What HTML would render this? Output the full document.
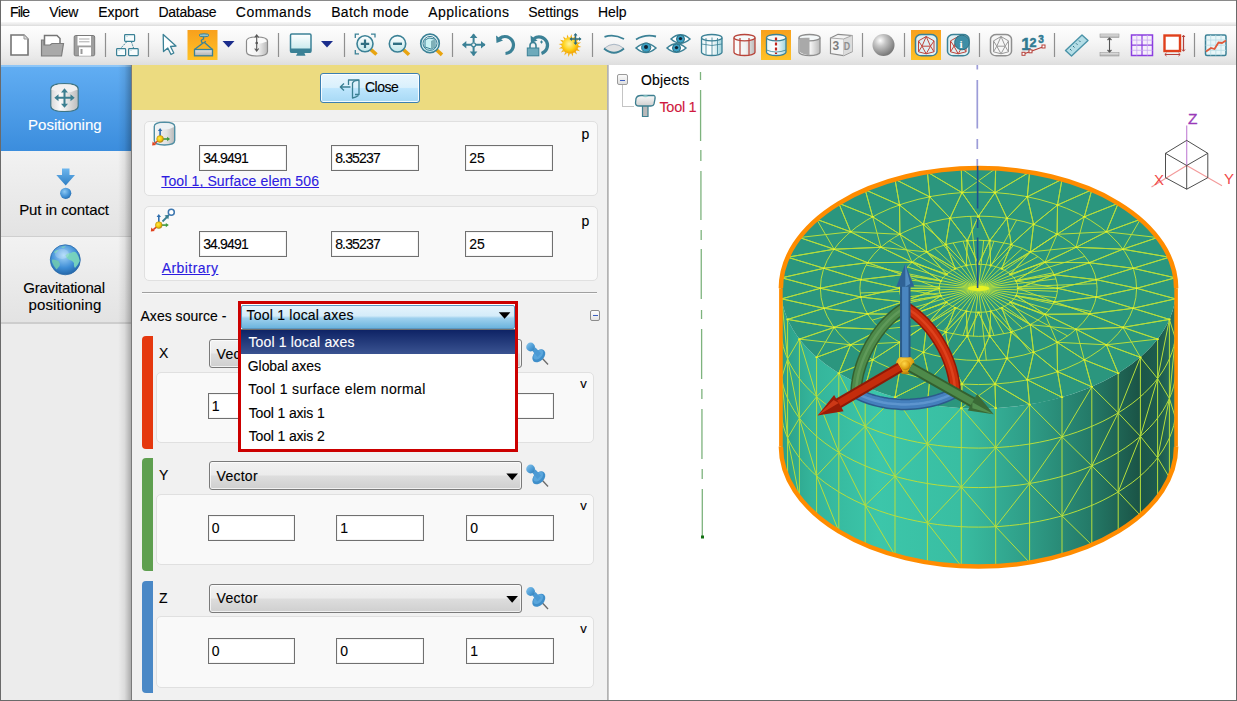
<!DOCTYPE html>
<html><head><meta charset="utf-8"><style>*{margin:0;padding:0;box-sizing:border-box}
html,body{width:1237px;height:701px;overflow:hidden;background:#fff}
body{position:relative;font-family:"Liberation Sans",sans-serif;font-size:14px;color:#000}
.a{position:absolute}
.t{position:absolute;white-space:nowrap;-webkit-text-stroke:.12px currentColor}
svg{position:absolute;overflow:visible}
</style></head><body>
<div class="a" style="left:0;top:0;width:1237px;height:1px;background:#8a8a8a"></div>
<div class="a" style="left:0;top:0;width:1px;height:701px;background:#6a6a6a"></div>
<div class="a" style="left:1236px;top:0;width:1px;height:701px;background:#6a6a6a"></div>
<div class="a" style="left:0;top:700px;width:1237px;height:1px;background:#6a6a6a"></div>
<div class="a" style="left:1px;top:21.5px;width:1235px;height:4.5px;background:linear-gradient(#f8f8f8,#e9e9e9 60%,#dcdcdc)"></div>
<span class="t" style="left:9.9px;top:5.1px;font-size:14px;line-height:14px;color:#000;letter-spacing:-0.80px;">File</span>
<span class="t" style="left:49.2px;top:5.1px;font-size:14px;line-height:14px;color:#000;letter-spacing:-0.33px;">View</span>
<span class="t" style="left:98.2px;top:5.1px;font-size:14px;line-height:14px;color:#000;">Export</span>
<span class="t" style="left:158.4px;top:5.1px;font-size:14px;line-height:14px;color:#000;letter-spacing:-0.26px;">Database</span>
<span class="t" style="left:235.8px;top:5.1px;font-size:14px;line-height:14px;color:#000;letter-spacing:0.51px;">Commands</span>
<span class="t" style="left:331.2px;top:5.1px;font-size:14px;line-height:14px;color:#000;letter-spacing:0.33px;">Batch mode</span>
<span class="t" style="left:428.3px;top:5.1px;font-size:14px;line-height:14px;color:#000;letter-spacing:0.47px;">Applications</span>
<span class="t" style="left:528.3px;top:5.1px;font-size:14px;line-height:14px;color:#000;letter-spacing:-0.06px;">Settings</span>
<span class="t" style="left:598.1px;top:5.1px;font-size:14px;line-height:14px;color:#000;letter-spacing:-0.10px;">Help</span>
<div class="a" style="left:1px;top:26px;width:1235px;height:39px;background:linear-gradient(#fefefe 0%,#f6f6f6 40%,#e9e9e9 80%,#dedede 100%)"></div>
<div class="a" style="left:1px;top:65px;width:131px;height:635px;background:#ececec"></div>
<div class="a" style="left:1px;top:65px;width:131px;height:86px;background:linear-gradient(#62aef3,#3b8ddd)"></div>
<div class="a" style="left:1px;top:65px;width:131px;height:2px;background:#8ec6f7"></div>
<div class="a" style="left:1px;top:151px;width:131px;height:86px;background:linear-gradient(#f2f2f2,#e3e3e3);border-bottom:1px solid #cfcfcf"></div>
<div class="a" style="left:1px;top:237px;width:131px;height:87px;background:linear-gradient(#f2f2f2,#e3e3e3);border-bottom:2px solid #cdcdcd"></div>
<div class="a" style="left:118px;top:65px;width:13px;height:635px;background:linear-gradient(90deg,rgba(0,0,0,0),rgba(0,0,0,.07) 50%,rgba(0,0,0,.27))"></div>
<div class="a" style="left:131px;top:65px;width:1px;height:635px;background:#7a7a7a"></div>
<span class="t" style="left:28.1px;top:116.6px;font-size:15px;line-height:15px;color:#fff;letter-spacing:0.01px;">Positioning</span>
<span class="t" style="left:19.2px;top:202.4px;font-size:15px;line-height:15px;color:#000;letter-spacing:-0.08px;">Put in contact</span>
<span class="t" style="left:23.2px;top:279.6px;font-size:15px;line-height:15px;color:#000;letter-spacing:-0.20px;">Gravitational</span>
<span class="t" style="left:28.6px;top:297.2px;font-size:15px;line-height:15px;color:#000;letter-spacing:0.10px;">positioning</span>
<div class="a" style="left:132px;top:65px;width:476px;height:635px;background:#f1f1f1"></div>
<div class="a" style="left:132px;top:65px;width:475px;height:45px;background:#ecdb80"></div>
<div class="a" style="left:607px;top:65px;width:2px;height:635px;background:linear-gradient(90deg,#a9a9a9,#cfcfcf)"></div>
<div class="a" style="left:609px;top:65px;width:627px;height:635px;background:#fff"></div>
<svg style="left:0;top:0" width="1237" height="65" viewBox="0 0 1237 65"><defs><linearGradient id="og" x1="0" y1="0" x2="0" y2="1"><stop offset="0" stop-color="#f8a01c"/><stop offset="1" stop-color="#ffc226"/></linearGradient><linearGradient id="gw" x1="0" y1="0" x2="1" y2="0"><stop offset="0" stop-color="#fdfdfd"/><stop offset=".55" stop-color="#f2f2f2"/><stop offset="1" stop-color="#b9b9b9"/></linearGradient><linearGradient id="gc" x1="0" y1="0" x2="0" y2="1"><stop offset="0" stop-color="#ffffff"/><stop offset="1" stop-color="#bfe6ea"/></linearGradient><linearGradient id="gt" x1="0" y1="0" x2="1" y2="0"><stop offset="0" stop-color="#e8f6f8"/><stop offset=".5" stop-color="#ffffff"/><stop offset="1" stop-color="#9fd3dc"/></linearGradient><radialGradient id="gs" cx=".35" cy=".3" r=".7"><stop offset="0" stop-color="#ffffff"/><stop offset=".35" stop-color="#c8c8c8"/><stop offset="1" stop-color="#7a7a7a"/></radialGradient><radialGradient id="sun" cx=".45" cy=".4" r=".6"><stop offset="0" stop-color="#fff4a0"/><stop offset=".6" stop-color="#ffd21a"/><stop offset="1" stop-color="#f0a000"/></radialGradient><linearGradient id="gb" x1="0" y1="0" x2="0" y2="1"><stop offset="0" stop-color="#e6e6e6"/><stop offset="1" stop-color="#b0b0b0"/></linearGradient></defs><line x1="105.5" y1="33" x2="105.5" y2="57" stroke="#8f8f8f" stroke-width="1.2"/><line x1="148.5" y1="33" x2="148.5" y2="57" stroke="#8f8f8f" stroke-width="1.2"/><line x1="278.5" y1="33" x2="278.5" y2="57" stroke="#8f8f8f" stroke-width="1.2"/><line x1="344.5" y1="33" x2="344.5" y2="57" stroke="#8f8f8f" stroke-width="1.2"/><line x1="452.5" y1="33" x2="452.5" y2="57" stroke="#8f8f8f" stroke-width="1.2"/><line x1="592.5" y1="33" x2="592.5" y2="57" stroke="#8f8f8f" stroke-width="1.2"/><line x1="862.5" y1="33" x2="862.5" y2="57" stroke="#8f8f8f" stroke-width="1.2"/><line x1="904.5" y1="33" x2="904.5" y2="57" stroke="#8f8f8f" stroke-width="1.2"/><line x1="979.5" y1="33" x2="979.5" y2="57" stroke="#8f8f8f" stroke-width="1.2"/><line x1="1054.5" y1="33" x2="1054.5" y2="57" stroke="#8f8f8f" stroke-width="1.2"/><line x1="1194.5" y1="33" x2="1194.5" y2="57" stroke="#8f8f8f" stroke-width="1.2"/><rect x="187.5" y="30" width="30" height="30" fill="url(#og)"/><rect x="761" y="30" width="30" height="30" fill="url(#og)"/><rect x="911" y="30" width="30" height="30" fill="url(#og)"/><path d="M11 35 H24 L28 39 V55 H11 Z" fill="#fff" stroke="#747474" stroke-width="1.6"/><path d="M24 35 V39 H28" fill="#ddd" stroke="#999" stroke-width="1"/><path d="M44.5 35.5 H57 L60 38.5 V46 H44.5 Z" fill="#fff" stroke="#757575" stroke-width="1.5"/><path d="M41.5 40 H44 V45 H50 L52 43.5 H63.5 L61.5 56 H41.5 Z" fill="#a9a9a9" stroke="#7c7c7c" stroke-width="1.2"/><rect x="74.2" y="35.5" width="20.5" height="20.3" rx="1.5" fill="#9e9e9e" stroke="#7a7a7a" stroke-width="1"/><rect x="77.5" y="36" width="13.5" height="9.5" fill="#fff"/><line x1="79" y1="39" x2="89.5" y2="39" stroke="#aaa"/><line x1="79" y1="41.8" x2="89.5" y2="41.8" stroke="#aaa"/><rect x="79" y="47.3" width="12" height="8.5" fill="#fff"/><rect x="80.5" y="49" width="2" height="5" fill="#999"/><g fill="#f7fcfd" stroke="#3b8196" stroke-width="1.2"><rect x="124.6" y="34.6" width="10" height="6.8" rx=".8"/><rect x="116.6" y="48.6" width="9" height="7" rx=".8"/><rect x="128.6" y="48.6" width="9.6" height="7" rx=".8"/></g><path d="M126.5 42 L121 48 M131.5 42 L133.5 48" stroke="#3b8196" stroke-width="1" fill="none" stroke-dasharray="1.5 1"/><path d="M117.5 50.5 H120 M129.5 50.5 H132 M125.5 36.5 H128" stroke="#cfe3e8" stroke-width="1"/><path d="M163.2 34.5 L176 46 L170.5 46.5 L173.8 53 L171 54.5 L167.8 48 L163.5 51.5 Z" fill="#fff" stroke="#3b8196" stroke-width="1.3" stroke-linejoin="round"/><ellipse cx="204" cy="35.3" rx="5" ry="1.5" fill="#8fc3d0" stroke="#3b8196" stroke-width="1"/><path d="M203.5 36.5 V39 Q200 40 202 42.5 Q205 43.5 205.5 41" fill="none" stroke="#3b8196" stroke-width="1.3"/><path d="M203 43 L194.5 49.5 M205 43 L212.5 49.5" stroke="#3b8196" stroke-width="1.3"/><rect x="194.5" y="49.5" width="18" height="6.3" fill="url(#gb)" stroke="#3b8196" stroke-width="1.3"/><path d="M222.5 41 H234.5 L228.5 47.5 Z" fill="#1b2d8c"/><path d="M321 41 H333 L327 47.5 Z" fill="#1b2d8c"/><path d="M246.5 41 V51.5 Q246.5 56 257 56 Q267.5 56 267.5 51.5 V41 Q267.5 37 257 37 Q246.5 37 246.5 41Z" fill="url(#gw)" stroke="#8a8a8a" stroke-width="1.2"/><path d="M247.2 41.5 Q257 46 266.8 41.5 Q266.8 37.7 257 37.7 Q247.2 37.7 247.2 41.5Z" fill="#fbfbfb"/><path d="M256.7 35.5 V50.5 M254.7 37.5 L256.7 35 L258.7 37.5 M254.7 48.5 L256.7 51 L258.7 48.5" stroke="#555" stroke-width="1.1" fill="none"/><circle cx="256.7" cy="43" r="1.3" fill="#555"/><rect x="290.5" y="34" width="20.5" height="18.3" rx="1.2" fill="url(#gc)" stroke="#3b8196" stroke-width="1.5"/><rect x="290.5" y="48.5" width="20.5" height="3.8" fill="#3b8196"/><path d="M298 52 H304 L305.5 55.8 H296 Z" fill="#3b8196"/><line x1="369.8" y1="48.599999999999994" x2="376.5" y2="54.5" stroke="#e8a410" stroke-width="3.6" stroke-linecap="butt"/><circle cx="365" cy="43.8" r="8" fill="url(#gc)" stroke="#3b8196" stroke-width="1.6"/><path d="M365 39.5 V48 M360.8 43.8 H369.2" stroke="#2f6f82" stroke-width="2.2"/><path d="M355.3 38 V34.2 H359 M371 34.2 H375 V37.5 M355.3 50 V53.8 H359" stroke="#3b8196" stroke-width="1.3" fill="none"/><line x1="402.42" y1="48.72" x2="409" y2="54.8" stroke="#e8a410" stroke-width="3.6" stroke-linecap="butt"/><circle cx="397.5" cy="43.8" r="8.2" fill="url(#gc)" stroke="#3b8196" stroke-width="1.6"/><path d="M393 43.8 H402" stroke="#2f6f82" stroke-width="2.4"/><line x1="435.58" y1="48.98" x2="442" y2="54.8" stroke="#e8a410" stroke-width="3.6" stroke-linecap="butt"/><circle cx="430" cy="43.4" r="9.3" fill="url(#gc)" stroke="#3b8196" stroke-width="1.6"/><circle cx="430" cy="43.4" r="7" fill="none" stroke="#3b8196" stroke-width="1"/><path d="M425 40 L429 38 L435 39 L435 47 L431 49 L425 47 Z" fill="#c9f2f4" stroke="#3b8196" stroke-width="1"/><path d="M431 41 V49 L435 47 V39 Z" fill="#7fb0b8"/><g stroke="#3b8196" stroke-width="2" fill="none"><path d="M473.6 34.5 V42.5 M473.6 47 V55.5 M462.8 44.8 H471.3 M476 44.8 H485"/><circle cx="473.6" cy="44.8" r="2" stroke-width="1.2"/></g><g fill="#3b8196"><path d="M469.8 38 L473.6 33.5 L477.4 38Z"/><path d="M469.8 51.5 L473.6 56 L477.4 51.5Z"/><path d="M466.3 41 L462 44.8 L466.3 48.6Z"/><path d="M481 41 L485.5 44.8 L481 48.6Z"/></g><path d="M499.5 38.5 A8.5 8.5 0 1 1 505.5 53.5" fill="none" stroke="#3b8196" stroke-width="3.2"/><path d="M496 35.5 L503 40.5 L496.5 43 Z" fill="#3b8196"/><path d="M534 38.5 A8.5 8.5 0 1 1 541.5 53.5" fill="none" stroke="#3b8196" stroke-width="3.2"/><path d="M530.5 35.5 L537.5 40.5 L531 43 Z" fill="#3b8196"/><path d="M530 48 V45.5 A3 3 0 0 1 536 45.5 V48" fill="none" stroke="#3b8196" stroke-width="1.6"/><rect x="527.3" y="48" width="11.5" height="7.8" fill="#6eaabb" stroke="#3b8196" stroke-width="1"/><path d="M540 42 H543 M541.5 40.5 V43.5" stroke="#3b8196" stroke-width="1"/><path d="M578.0 45.5 L581.4 47.0 L577.7 47.6Z M577.4 48.6 L580.0 51.2 L576.4 50.4Z M575.7 51.2 L577.0 54.6 L574.0 52.4Z M573.1 52.9 L573.0 56.6 L571.1 53.4Z M570.0 53.5 L568.5 56.9 L567.9 53.2Z M566.9 52.9 L564.3 55.5 L565.1 51.9Z M564.3 51.2 L560.9 52.5 L563.1 49.5Z M562.6 48.6 L558.9 48.5 L562.1 46.6Z M562.0 45.5 L558.6 44.0 L562.3 43.4Z M562.6 42.4 L560.0 39.8 L563.6 40.6Z M564.3 39.8 L563.0 36.4 L566.0 38.6Z M566.9 38.1 L567.0 34.4 L568.9 37.6Z M570.0 37.5 L571.5 34.1 L572.1 37.8Z M573.1 38.1 L575.7 35.5 L574.9 39.1Z M575.7 39.8 L579.1 38.5 L576.9 41.5Z M577.4 42.4 L581.1 42.5 L577.9 44.4Z" fill="#f2b018"/><circle cx="570" cy="45.5" r="8.3" fill="url(#sun)"/><g stroke="#2f6f82" stroke-width="1.5"><path d="M575.5 34 V44 M570.5 39 H580.5"/></g><g fill="#2f6f82"><path d="M573.5 35.5 L575.5 33 L577.5 35.5Z M573.5 42.5 L575.5 45 L577.5 42.5Z M572 37 L569.5 39 L572 41Z M579 37 L581.5 39 L579 41Z"/></g><path d="M604.5 36.8 Q614 33.5 624 39" fill="none" stroke="#3b8196" stroke-width="1.8"/><path d="M604 48.5 Q614 40 624 48.5 Q614 57 604 48.5Z" fill="#e2e2e2" stroke="#9ab" stroke-width=".8"/><path d="M604 48.5 Q614 57 624 48.5" fill="none" stroke="#3b8196" stroke-width="1.8"/><path d="M636 39.5 Q645 34 656 36.5" fill="none" stroke="#3b8196" stroke-width="1.8"/><path d="M636 48 Q646 39 656 48 Q646 57 636 48Z" fill="#fff" stroke="#3b8196" stroke-width="1.5"/><circle cx="646.2" cy="47.5" r="4.6" fill="#3aa0c4" stroke="#2f6f82" stroke-width="1"/><circle cx="646" cy="47" r="2" fill="#123"/><path d="M671.0 39 Q680.5 30.5 690.0 39 Q680.5 47.5 671.0 39Z" fill="#fff" stroke="#3b8196" stroke-width="1.5"/><circle cx="680.5" cy="39" r="4" fill="#3aa0c4" stroke="#2f6f82" stroke-width="1"/><circle cx="680.5" cy="38.6" r="1.7" fill="#123"/><path d="M667.0 48 Q676.5 39.5 686.0 48 Q676.5 56.5 667.0 48Z" fill="#fff" stroke="#3b8196" stroke-width="1.5"/><circle cx="676.5" cy="48" r="4" fill="#3aa0c4" stroke="#2f6f82" stroke-width="1"/><circle cx="676.5" cy="47.6" r="1.7" fill="#123"/><path d="M701.5 37.7 V52.3 A10.25 3.2 0 0 0 722 52.3 V37.7" fill="url(#gt)" stroke="#3b8196" stroke-width="1.3"/><ellipse cx="711.75" cy="37.7" rx="10.25" ry="3.2" fill="#f5f9fa" stroke="#3b8196" stroke-width="1.3"/><path d="M706 38 V54.5 M712 37.5 V55.5 M717.5 38 V54.5" stroke="#3b8196" stroke-width="1" opacity=".8"/><path d="M701.5 44 Q712 47 722 44" fill="none" stroke="#3b8196" stroke-width=".8"/><path d="M734 37.7 V52.3 A10.5 3.2 0 0 0 755 52.3 V37.7" fill="url(#gw)" stroke="#b8443a" stroke-width="1.3"/><ellipse cx="744.5" cy="37.7" rx="10.5" ry="3.2" fill="#f5f9fa" stroke="#b8443a" stroke-width="1.3"/><path d="M740 38 V55 M749 38 V55" stroke="#b8443a" stroke-width="1.2"/><path d="M766.5 37.7 V52.3 A9.75 3.2 0 0 0 786 52.3 V37.7" fill="url(#gt)" stroke="#3b8196" stroke-width="1.3"/><ellipse cx="776.25" cy="37.7" rx="9.75" ry="3.2" fill="#f5f9fa" stroke="#3b8196" stroke-width="1.3"/><path d="M776 37.5 V54" stroke="#c0221a" stroke-width="2.2" stroke-dasharray="3 2"/><path d="M766.5 50 Q776 54 786 50" fill="none" stroke="#3b8196" stroke-width=".8"/><path d="M799 37.7 V52.3 A10.5 3.2 0 0 0 820 52.3 V37.7" fill="url(#gw)" stroke="#8e8e8e" stroke-width="1.3"/><ellipse cx="809.5" cy="37.7" rx="10.5" ry="3.2" fill="#f5f9fa" stroke="#8e8e8e" stroke-width="1.3"/><path d="M799.7 38 V52 Q804 55 809.5 55.5 V37.8 Q804 37.5 799.7 38Z" fill="#a9a9a9"/><path d="M830.5 38 L838 34.3 L852 35.5 V51.5 L843.5 55.6 L830.5 53.5Z" fill="#f4f4f4" stroke="#8a8a8a" stroke-width="1.2"/><path d="M843.5 39 V55.6" stroke="#c0c0c0" stroke-width="1"/><path d="M843.5 39 L852 35.5 V51.5 L843.5 55.6Z" fill="#dcdcdc"/><path d="M830.5 38 L843.5 39 L852 35.5" fill="none" stroke="#aaa" stroke-width="1"/><text x="832.6" y="50.3" font-family="Liberation Sans" font-size="12" font-weight="bold" fill="#7e7e7e">3</text><text x="843.8" y="50.5" font-family="Liberation Sans" font-size="11" font-weight="bold" fill="#8e8e8e" transform="translate(843.8 0) scale(.8 1) translate(-843.8 0)">D</text><circle cx="883.5" cy="45" r="11" fill="url(#gs)"/><rect x="915.5" y="34.5" width="21.5" height="21.299999999999997" rx="6" ry="4.5" fill="#dff0f4" stroke="#3b8196" stroke-width="1.5"/><path d="M918.5 40.9L926.2 36.5 M926.2 36.5L934.0 40.9 M918.5 40.9L922.0 46.2 M926.2 36.5L922.0 46.2 M926.2 36.5L930.5 46.2 M934.0 40.9L930.5 46.2 M922.0 46.2L930.5 46.2 M918.5 40.9L918.5 51.8 M922.0 46.2L918.5 51.8 M922.0 46.2L926.2 53.8 M930.5 46.2L926.2 53.8 M930.5 46.2L934.0 51.8 M934.0 40.9L934.0 51.8 M918.5 51.8L926.2 53.8 M926.2 53.8L934.0 51.8" fill="none" stroke="#c0453c" stroke-width="1"/><rect x="947.5" y="34.5" width="21.5" height="21.299999999999997" rx="6" ry="4.5" fill="#dff0f4" stroke="#3b8196" stroke-width="1.5"/><path d="M950.5 40.9L958.2 36.5 M958.2 36.5L966.0 40.9 M950.5 40.9L954.0 46.2 M958.2 36.5L954.0 46.2 M958.2 36.5L962.5 46.2 M966.0 40.9L962.5 46.2 M954.0 46.2L962.5 46.2 M950.5 40.9L950.5 51.8 M954.0 46.2L950.5 51.8 M954.0 46.2L958.2 53.8 M962.5 46.2L958.2 53.8 M962.5 46.2L966.0 51.8 M966.0 40.9L966.0 51.8 M950.5 51.8L958.2 53.8 M958.2 53.8L966.0 51.8" fill="none" stroke="#c0453c" stroke-width="1"/><circle cx="962" cy="42.5" r="7.3" fill="#3e8ea6" stroke="#2d6f82" stroke-width="1"/><text x="959.6" y="47.5" font-family="Liberation Serif" font-size="11" font-weight="bold" fill="#fff">i</text><rect x="990.5" y="34.5" width="21.0" height="21.299999999999997" rx="6" ry="4.5" fill="#f6f6f6" stroke="#8f8f8f" stroke-width="1.5"/><path d="M993.5 40.9L1001.0 36.5 M1001.0 36.5L1008.5 40.9 M993.5 40.9L996.8 46.2 M1001.0 36.5L996.8 46.2 M1001.0 36.5L1005.2 46.2 M1008.5 40.9L1005.2 46.2 M996.8 46.2L1005.2 46.2 M993.5 40.9L993.5 51.8 M996.8 46.2L993.5 51.8 M996.8 46.2L1001.0 53.8 M1005.2 46.2L1001.0 53.8 M1005.2 46.2L1008.5 51.8 M1008.5 40.9L1008.5 51.8 M993.5 51.8L1001.0 53.8 M1001.0 53.8L1008.5 51.8" fill="none" stroke="#9a9a9a" stroke-width="1"/><g font-family="Liberation Sans" font-weight="bold" fill="#2f7a92" stroke="#2f7a92" stroke-width=".5"><text x="1021.3" y="49.5" font-size="17">1</text><text x="1029.5" y="47.2" font-size="12.5">2</text><text x="1038.3" y="42.6" font-size="10">3</text></g><path d="M1023.5 54 L1030.5 51.5 L1034.5 50 L1044 46.5" stroke="#b5403a" stroke-width="1.3" fill="none"/><g fill="#fff" stroke="#b5403a" stroke-width="1"><rect x="1022" y="52.3" width="3" height="3"/><rect x="1029" y="49.8" width="3" height="3"/><rect x="1042" y="45" width="3" height="3"/></g><path d="M1065.5 50.5 L1082 35 L1088 40.5 L1071.5 56 Z" fill="#b4dde6" stroke="#4a93a8" stroke-width="1.4" stroke-linejoin="round"/><path d="M1070 49 l1.5 1.5 M1073 46 l1.5 1.5 M1076 43.3 l1.5 1.5 M1079 40.5 l1.5 1.5" stroke="#2f6f82" stroke-width="1"/><rect x="1100" y="34" width="19" height="3.5" fill="url(#gb)" stroke="#999" stroke-width=".6"/><rect x="1100" y="52.5" width="19" height="3.5" fill="url(#gb)" stroke="#999" stroke-width=".6"/><path d="M1109.5 38 V52 M1107.5 40 L1109.5 38 L1111.5 40 M1107.5 50 L1109.5 52 L1111.5 50" stroke="#555" stroke-width="1.1" fill="none"/><rect x="1131.5" y="35" width="21" height="20.5" fill="#f6f0fb" stroke="#8a3ee0" stroke-width="1.5"/><path d="M1142 35 V55.5 M1131.5 45.2 H1152.5" stroke="#8a3ee0" stroke-width="1.2"/><path d="M1136.8 35 V55.5 M1147.3 35 V55.5 M1131.5 40.1 H1152.5 M1131.5 50.3 H1152.5" stroke="#c8a8f0" stroke-width=".8"/><rect x="1164.5" y="35.5" width="15.5" height="15.5" fill="#fff" stroke="#e0401c" stroke-width="2.4"/><path d="M1183.5 35.5 V51 M1165 54.5 H1180" stroke="#b5403a" stroke-width="1.2"/><path d="M1182 37 L1183.5 35.2 L1185 37 M1182 49.5 L1183.5 51.3 L1185 49.5 M1166.5 53 L1164.8 54.5 L1166.5 56 M1178.5 53 L1180.2 54.5 L1178.5 56" stroke="#b5403a" stroke-width="1" fill="none"/><rect x="1205.5" y="35" width="20.5" height="20.5" rx="1.5" fill="#e8f6f8" stroke="#3b8196" stroke-width="1.5"/><path d="M1210.7 35 V55.5 M1215.8 35 V55.5 M1221 35 V55.5 M1205.5 40 H1226 M1205.5 45.2 H1226 M1205.5 50.3 H1226" stroke="#b8dce4" stroke-width=".8"/><path d="M1206 51.5 L1211 48 L1214.5 49 L1218.5 42.5 L1222 43 L1226 40.5" fill="none" stroke="#e05a3a" stroke-width="1.8"/></svg>

<style>
.card{position:absolute;background:#f9f9f9;border:1px solid #e0e0e0;border-radius:5px}
.inp{position:absolute;background:#fff;border:1px solid #707070;box-shadow:inset 0 0 0 1px #f4f4f4}
.combo{position:absolute;border:1px solid #7a7a7a;border-radius:3px;background:linear-gradient(#f2f2f2 0%,#ebebeb 48%,#dddddd 52%,#cfcfcf 100%);box-shadow:inset 0 0 0 1px rgba(255,255,255,.7)}
.bar{position:absolute;left:142px;width:10.5px;border-radius:4px 0 0 4px}
</style>
<div class="a" style="left:320px;top:72.5px;width:100px;height:30px;border:1px solid #3c7fb1;border-radius:3px;background:linear-gradient(#eaf6fd 0%,#d9f0fc 48%,#bee6fd 52%,#a7d9f5 100%);box-shadow:inset 0 0 0 1px rgba(255,255,255,.85)"></div>
<svg style="left:0;top:0" width="1" height="1"><g fill="none" stroke="#3a7f92" stroke-width="1.3" stroke-linejoin="round"><path d="M348.5 85 V80 H359 V94.5 H355"/><path d="M359 80.5 Q354 80 352.5 83 V98 Q355.5 97.5 358.5 95.5"/><path d="M340.5 87 H350.5 M344 83.5 L340.3 87 L344 90.5"/></g></svg>
<span class="t" style="left:365.0px;top:80.1px;font-size:14px;line-height:14px;color:#000;letter-spacing:-0.53px;">Close</span>
<div class="card" style="left:143.5px;top:120.5px;width:454.5px;height:75.0px"></div>
<div class="card" style="left:143.5px;top:206.3px;width:454.5px;height:75.19999999999999px"></div>
<div class="inp" style="left:199px;top:145.2px;width:87.5px;height:26.0px"></div>
<span class="t" style="left:203.2px;top:151.2px;font-size:14px;line-height:14px;color:#000;letter-spacing:-0.85px;">34.9491</span>
<div class="inp" style="left:331px;top:145.2px;width:88px;height:26.0px"></div>
<span class="t" style="left:335.2px;top:151.2px;font-size:14px;line-height:14px;color:#000;letter-spacing:-0.85px;">8.35237</span>
<div class="inp" style="left:465px;top:145.2px;width:87.79999999999995px;height:26.0px"></div>
<span class="t" style="left:469.2px;top:151.2px;font-size:14px;line-height:14px;color:#000;">25</span>
<div class="inp" style="left:199px;top:231.2px;width:87.5px;height:26.0px"></div>
<span class="t" style="left:203.2px;top:237.2px;font-size:14px;line-height:14px;color:#000;letter-spacing:-0.85px;">34.9491</span>
<div class="inp" style="left:331px;top:231.2px;width:88px;height:26.0px"></div>
<span class="t" style="left:335.2px;top:237.2px;font-size:14px;line-height:14px;color:#000;letter-spacing:-0.85px;">8.35237</span>
<div class="inp" style="left:465px;top:231.2px;width:87.79999999999995px;height:26.0px"></div>
<span class="t" style="left:469.2px;top:237.2px;font-size:14px;line-height:14px;color:#000;">25</span>
<span class="t" style="left:581.5px;top:127.0px;font-size:14px;line-height:14px;color:#000;">p</span>
<span class="t" style="left:581.5px;top:213.8px;font-size:14px;line-height:14px;color:#000;">p</span>
<span class="t" style="left:161.3px;top:174.3px;font-size:14px;line-height:14px;color:#2d1ce0;letter-spacing:0.12px;text-decoration:underline;">Tool 1, Surface elem 506</span>
<span class="t" style="left:161.8px;top:261.1px;font-size:14px;line-height:14px;color:#2d1ce0;letter-spacing:0.41px;text-decoration:underline;">Arbitrary</span>
<svg style="left:0;top:0" width="1" height="1"><defs><linearGradient id="cw" x1="0" y1="0" x2="1" y2="0"><stop offset="0" stop-color="#f6f6f6"/><stop offset=".6" stop-color="#e2e2e2"/><stop offset="1" stop-color="#b8b8b8"/></linearGradient><radialGradient id="yd" cx=".4" cy=".4" r=".6"><stop offset="0" stop-color="#ffe84a"/><stop offset=".7" stop-color="#f2c200"/><stop offset="1" stop-color="#a88420"/></radialGradient><linearGradient id="pin" x1="0" y1="0" x2="1" y2="1"><stop offset="0" stop-color="#8cc8ee"/><stop offset=".6" stop-color="#4a9ad4"/><stop offset="1" stop-color="#2f78b0"/></linearGradient></defs><path d="M154.3 126.5 V140.5 Q154.3 145 164.5 145 Q174.7 145 174.7 140.5 V126.5 Q174.7 122.3 164.5 122.3 Q154.3 122.3 154.3 126.5Z" fill="url(#cw)" stroke="#4f8ea3" stroke-width="1.4"/><path d="M155 127 Q164.5 132 174 127 Q174 123 164.5 123 Q155 123 155 127Z" fill="#edf2f4"/><path d="M160.1 139 V130" stroke="#2f6eae" stroke-width="1.6"/><path d="M157.9 131 L160.1 128 L162.29999999999998 131Z" fill="#2f6eae"/><path d="M160.1 139 H168.1" stroke="#3f9a3f" stroke-width="1.6"/><path d="M167.1 136.8 L170.1 139 L167.1 141.2Z" fill="#3f9a3f"/><path d="M160.1 139 L154.6 143.5" stroke="#e0401c" stroke-width="1.6"/><path d="M152.1 145.5 L152.6 141.5 L156.1 145Z" fill="#e0401c"/><circle cx="160.1" cy="139" r="3.4" fill="url(#yd)" stroke="#b89018" stroke-width=".6"/><path d="M158.8 225.1 V216.1" stroke="#2f6eae" stroke-width="1.6"/><path d="M156.60000000000002 217.1 L158.8 214.1 L161.0 217.1Z" fill="#2f6eae"/><path d="M158.8 225.1 H166.8" stroke="#3f9a3f" stroke-width="1.6"/><path d="M165.8 222.9 L168.8 225.1 L165.8 227.29999999999998Z" fill="#3f9a3f"/><path d="M158.8 225.1 L153.3 229.6" stroke="#e0401c" stroke-width="1.6"/><path d="M150.8 231.6 L151.3 227.6 L154.8 231.1Z" fill="#e0401c"/><circle cx="158.8" cy="225.1" r="3.4" fill="url(#yd)" stroke="#b89018" stroke-width=".6"/><path d="M162.5 221.5 L167 217" stroke="#3a7f92" stroke-width="1.8"/><path d="M164.5 215.5 L169.3 214.5 L168.3 219.3Z" fill="#3a7f92"/><circle cx="171.3" cy="212.3" r="3" fill="#fff" stroke="#3f78b0" stroke-width="1.5"/></svg>
<div class="a" style="left:142px;top:291.5px;width:455px;height:1px;background:#a0a0a0"></div>
<div class="a" style="left:142px;top:292.5px;width:455px;height:1px;background:#fbfbfb"></div>
<span class="t" style="left:140.5px;top:308.7px;font-size:14px;line-height:14px;color:#000;letter-spacing:0.02px;">Axes source -</span>
<div class="a" style="left:589.5px;top:310px;width:10.5px;height:10.5px;border:1px solid #8c8c8c;border-radius:2px;background:linear-gradient(#fdfdfd,#e4e4e4)"><div class="a" style="left:2px;top:4px;width:5px;height:1.2px;background:#3a5fc0"></div></div>
<div class="bar" style="top:336px;height:112.5px;background:#e5380e"></div>
<span class="t" style="left:158.9px;top:346.3px;font-size:14px;line-height:14px;color:#000;">X</span>
<div class="combo" style="left:209px;top:339.3px;width:313px;height:29px"></div>
<span class="t" style="left:216.6px;top:346.6px;font-size:14px;line-height:14px;color:#000;letter-spacing:0.26px;">Vector</span>
<svg style="left:0;top:0" width="1" height="1"><path d="M506.3 351.5 H518 L512.15 358.3Z" fill="#000"/></svg>
<div class="card" style="left:155.8px;top:371.5px;width:438.49999999999994px;height:71.5px"></div>
<span class="t" style="left:580.2px;top:377.4px;font-size:13px;line-height:13px;color:#000;">v</span>
<div class="inp" style="left:207.5px;top:393.2px;width:87.5px;height:26.0px"></div>
<span class="t" style="left:211.7px;top:399.2px;font-size:14px;line-height:14px;color:#000;">1</span>
<div class="inp" style="left:336px;top:393.2px;width:87.5px;height:26.0px"></div>
<span class="t" style="left:340.2px;top:399.2px;font-size:14px;line-height:14px;color:#000;">0</span>
<div class="inp" style="left:466px;top:393.2px;width:87.79999999999995px;height:26.0px"></div>
<span class="t" style="left:470.2px;top:399.2px;font-size:14px;line-height:14px;color:#000;">0</span>
<div class="bar" style="top:458px;height:112.5px;background:#5e9f4f"></div>
<span class="t" style="left:158.9px;top:468.3px;font-size:14px;line-height:14px;color:#000;">Y</span>
<div class="combo" style="left:209px;top:461.3px;width:313px;height:29px"></div>
<span class="t" style="left:216.6px;top:468.6px;font-size:14px;line-height:14px;color:#000;letter-spacing:0.26px;">Vector</span>
<svg style="left:0;top:0" width="1" height="1"><path d="M506.3 473.5 H518 L512.15 480.3Z" fill="#000"/></svg>
<div class="card" style="left:155.8px;top:493.5px;width:438.49999999999994px;height:71.5px"></div>
<span class="t" style="left:580.2px;top:499.4px;font-size:13px;line-height:13px;color:#000;">v</span>
<div class="inp" style="left:207.5px;top:515.2px;width:87.5px;height:26.0px"></div>
<span class="t" style="left:211.7px;top:521.2px;font-size:14px;line-height:14px;color:#000;">0</span>
<div class="inp" style="left:336px;top:515.2px;width:87.5px;height:26.0px"></div>
<span class="t" style="left:340.2px;top:521.2px;font-size:14px;line-height:14px;color:#000;">1</span>
<div class="inp" style="left:466px;top:515.2px;width:87.79999999999995px;height:26.0px"></div>
<span class="t" style="left:470.2px;top:521.2px;font-size:14px;line-height:14px;color:#000;">0</span>
<div class="bar" style="top:580.5px;height:112.5px;background:#4a88c6"></div>
<span class="t" style="left:158.9px;top:590.8px;font-size:14px;line-height:14px;color:#000;">Z</span>
<div class="combo" style="left:209px;top:583.8px;width:313px;height:29px"></div>
<span class="t" style="left:216.6px;top:591.1px;font-size:14px;line-height:14px;color:#000;letter-spacing:0.26px;">Vector</span>
<svg style="left:0;top:0" width="1" height="1"><path d="M506.3 596.0 H518 L512.15 602.8Z" fill="#000"/></svg>
<div class="card" style="left:155.8px;top:616.0px;width:438.49999999999994px;height:71.5px"></div>
<span class="t" style="left:580.2px;top:621.9px;font-size:13px;line-height:13px;color:#000;">v</span>
<div class="inp" style="left:207.5px;top:637.7px;width:87.5px;height:26.0px"></div>
<span class="t" style="left:211.7px;top:643.7px;font-size:14px;line-height:14px;color:#000;">0</span>
<div class="inp" style="left:336px;top:637.7px;width:87.5px;height:26.0px"></div>
<span class="t" style="left:340.2px;top:643.7px;font-size:14px;line-height:14px;color:#000;">0</span>
<div class="inp" style="left:466px;top:637.7px;width:87.79999999999995px;height:26.0px"></div>
<span class="t" style="left:470.2px;top:643.7px;font-size:14px;line-height:14px;color:#000;">1</span>
<svg style="left:0;top:0" width="1" height="1"><path d="M542 358 L548 364.5" stroke="#6a6a6a" stroke-width="1.3"/><ellipse cx="538.8" cy="355.8" rx="7.6" ry="5.2" transform="rotate(-45 538.8 355.8)" fill="#3f8fca"/><ellipse cx="538.2" cy="354.6" rx="6" ry="3.6" transform="rotate(-45 538.2 354.6)" fill="#5aa6dc"/><path d="M532 350.5 L535.5 347.5 L541 353.5 L537.5 357Z" fill="#4c9ad4"/><circle cx="530.6" cy="347" r="4.4" fill="url(#pin)"/><path d="M542 480 L548 486.5" stroke="#6a6a6a" stroke-width="1.3"/><ellipse cx="538.8" cy="477.8" rx="7.6" ry="5.2" transform="rotate(-45 538.8 477.8)" fill="#3f8fca"/><ellipse cx="538.2" cy="476.6" rx="6" ry="3.6" transform="rotate(-45 538.2 476.6)" fill="#5aa6dc"/><path d="M532 472.5 L535.5 469.5 L541 475.5 L537.5 479Z" fill="#4c9ad4"/><circle cx="530.6" cy="469" r="4.4" fill="url(#pin)"/><path d="M542 602.5 L548 609.0" stroke="#6a6a6a" stroke-width="1.3"/><ellipse cx="538.8" cy="600.3" rx="7.6" ry="5.2" transform="rotate(-45 538.8 600.3)" fill="#3f8fca"/><ellipse cx="538.2" cy="599.1" rx="6" ry="3.6" transform="rotate(-45 538.2 599.1)" fill="#5aa6dc"/><path d="M532 595.0 L535.5 592.0 L541 598.0 L537.5 601.5Z" fill="#4c9ad4"/><circle cx="530.6" cy="591.5" r="4.4" fill="url(#pin)"/></svg>
<div class="a" style="left:238px;top:301px;width:280px;height:151px;border:3px solid #cc0000;background:#fff"></div>
<div class="a" style="left:241px;top:304.5px;width:274px;height:24.5px;border:1px solid #5c97c0;border-radius:2px;background:linear-gradient(#e6f4fc 0%,#d4ecf9 45%,#9fd1ee 55%,#6cb4de 100%)"></div>
<div class="a" style="left:241px;top:328.8px;width:274px;height:1.5px;background:#6f6f6f"></div>
<div class="a" style="left:241px;top:330.2px;width:274px;height:23.8px;background:linear-gradient(#0e2365,#3a5391)"></div>
<svg style="left:0;top:0" width="1" height="1"><path d="M498.8 312.3 H510.4 L504.6 318.8Z" fill="#000"/></svg>
<span class="t" style="left:246.6px;top:308.2px;font-size:14px;line-height:14px;color:#000;letter-spacing:0.21px;">Tool 1 local axes</span>
<span class="t" style="left:248.4px;top:334.9px;font-size:14px;line-height:14px;color:#fff;letter-spacing:0.16px;">Tool 1 local axes</span>
<span class="t" style="left:247.8px;top:358.7px;font-size:14px;line-height:14px;color:#000;letter-spacing:-0.08px;">Global axes</span>
<span class="t" style="left:248.3px;top:382.2px;font-size:14px;line-height:14px;color:#000;letter-spacing:0.36px;">Tool 1 surface elem normal</span>
<span class="t" style="left:248.7px;top:406.1px;font-size:14px;line-height:14px;color:#000;letter-spacing:-0.15px;">Tool 1 axis 1</span>
<span class="t" style="left:248.7px;top:429.3px;font-size:14px;line-height:14px;color:#000;letter-spacing:-0.15px;">Tool 1 axis 2</span>
<svg style="left:0;top:0" width="1" height="1"><defs><linearGradient id="nc" x1="0" y1="0" x2="1" y2="0"><stop offset="0" stop-color="#d8d8d8"/><stop offset=".35" stop-color="#fbfbfb"/><stop offset="1" stop-color="#bdbdbd"/></linearGradient><linearGradient id="na" x1="0" y1="0" x2="0" y2="1"><stop offset="0" stop-color="#6db6ee"/><stop offset="1" stop-color="#2f7fc4"/></linearGradient><radialGradient id="nb" cx=".4" cy=".35" r=".7"><stop offset="0" stop-color="#8cc8f4"/><stop offset=".7" stop-color="#3a8ad0"/><stop offset="1" stop-color="#2a6aa8"/></radialGradient><radialGradient id="ng" cx=".45" cy=".35" r=".7"><stop offset="0" stop-color="#a8d8fa"/><stop offset=".6" stop-color="#3f8ed6"/><stop offset="1" stop-color="#1f5fa0"/></radialGradient></defs><path d="M50.8 89 V106 Q50.8 111.5 64.5 111.5 Q78.2 111.5 78.2 106 V89 Q78.2 83.6 64.5 83.6 Q50.8 83.6 50.8 89Z" fill="url(#nc)" stroke="#3f7585" stroke-width="1.1"/><path d="M51.5 89.5 Q64.5 96.5 77.5 89.5 Q77.5 84.3 64.5 84.3 Q51.5 84.3 51.5 89.5Z" fill="#f0f0f0"/><g stroke="#3d7f90" stroke-width="2" fill="none"><path d="M64.5 90 V106 M56 97.8 H73"/></g><g fill="#3d7f90"><path d="M61 92.5 L64.5 88.3 L68 92.5Z M61 103.7 L64.5 107.7 L68 103.7Z M58.5 94.3 L54.3 97.8 L58.5 101.3Z M70.5 94.3 L74.7 97.8 L70.5 101.3Z"/></g><path d="M62 168.5 H69.5 V175 H75 L65.7 185.5 L56.3 175 H62Z" fill="url(#na)"/><circle cx="65.7" cy="193.3" r="5.6" fill="url(#nb)"/><circle cx="65.3" cy="259.8" r="15" fill="url(#ng)" stroke="#2a6aa8" stroke-width=".8"/><path d="M65.5 255.5 Q67 252.5 71 253 Q74 251 76 252.5 Q79 256 79.8 261 Q78 265 75 268 Q73.5 266 74 263 Q72 260 69.5 260 Q66.5 259 65.5 255.5Z" fill="#78d4bc" opacity=".95"/><path d="M52 259.5 Q55 259 58.5 261 Q60.5 263.5 59.5 266 Q57.5 268.5 56.5 269.5 Q53.5 266 52 262Z" fill="#70c8b0" opacity=".9"/><path d="M54 252 Q56 249.5 58.5 250 Q57 252.5 55 253.5Z M61.5 247 Q63.5 246 66 246.5 Q64 248 62 248Z" fill="#78d0b8" opacity=".9"/><ellipse cx="62" cy="254" rx="7" ry="5" fill="#fff" opacity=".18"/></svg>
<div class="a" style="left:616.5px;top:74px;width:11px;height:11px;border:1px solid #9a9a9a;border-radius:2px;background:linear-gradient(#fafafa,#dedede)"><div class="a" style="left:2px;top:4.5px;width:5px;height:1.3px;background:#3f5fbf"></div></div>
<div class="a" style="left:621.5px;top:85px;width:1px;height:22px;background:#c4c4c4"></div>
<div class="a" style="left:621.5px;top:106px;width:12px;height:1px;background:#c4c4c4"></div>
<span class="t" style="left:640.9px;top:72.8px;font-size:14px;line-height:14px;color:#000;letter-spacing:0.17px;">Objects</span>
<span class="t" style="left:659.4px;top:99.5px;font-size:14.5px;line-height:14.5px;color:#d01840;letter-spacing:-0.28px;">Tool 1</span>
<svg style="left:0;top:0" width="1" height="1"><defs><linearGradient id="hm" x1="0" y1="0" x2="0" y2="1"><stop offset="0" stop-color="#fafafa"/><stop offset="1" stop-color="#cfcfcf"/></linearGradient></defs><path d="M642.5 105 V116.5 H648 V105" fill="#b9b9b9" stroke="#3d7f90" stroke-width="1.2"/><path d="M636 98.5 Q637 95.5 641 95.5 H654 Q655.5 96 655 99 L654 104 Q653.5 106 651 106 H639 Q635.5 106 635.5 103 Z" fill="url(#hm)" stroke="#3d7f90" stroke-width="1.3"/><ellipse cx="645.5" cy="96.2" rx="2.5" ry="1" fill="#9cc"/></svg>
<svg style="left:0;top:0" width="1" height="1"><line x1="700.50" y1="72" x2="700.50" y2="80" stroke="#7db37d" stroke-width="1.3"/><line x1="700.58" y1="90" x2="700.58" y2="141" stroke="#7db37d" stroke-width="1.3"/><line x1="700.84" y1="150" x2="700.84" y2="161" stroke="#7db37d" stroke-width="1.3"/><line x1="700.93" y1="171" x2="700.93" y2="220" stroke="#7db37d" stroke-width="1.3"/><line x1="701.18" y1="230" x2="701.18" y2="240" stroke="#7db37d" stroke-width="1.3"/><line x1="701.26" y1="249" x2="701.26" y2="299" stroke="#7db37d" stroke-width="1.3"/><line x1="701.53" y1="310" x2="701.53" y2="319" stroke="#7db37d" stroke-width="1.3"/><line x1="701.61" y1="329" x2="701.61" y2="379" stroke="#7db37d" stroke-width="1.3"/><line x1="701.87" y1="389" x2="701.87" y2="399" stroke="#7db37d" stroke-width="1.3"/><line x1="701.95" y1="409" x2="701.95" y2="459" stroke="#7db37d" stroke-width="1.3"/><line x1="702.21" y1="469" x2="702.21" y2="479" stroke="#7db37d" stroke-width="1.3"/><line x1="702.30" y1="489" x2="702.30" y2="536" stroke="#7db37d" stroke-width="1.3"/><rect x="701" y="535.5" width="3" height="3" fill="#127012"/><line x1="977.3" y1="65" x2="977.3" y2="69.5" stroke="#9c9cd8" stroke-width="1.7"/><line x1="977.3" y1="80" x2="977.3" y2="128.5" stroke="#9c9cd8" stroke-width="1.7"/><line x1="977.3" y1="139" x2="977.3" y2="149" stroke="#9c9cd8" stroke-width="1.7"/><line x1="977.3" y1="159" x2="977.3" y2="166" stroke="#9c9cd8" stroke-width="1.7"/></svg>
<svg style="left:0;top:0" width="1" height="1"><defs><linearGradient id="side" x1="779" y1="0" x2="1178" y2="0" gradientUnits="userSpaceOnUse"><stop offset="0" stop-color="#2a9c86"/><stop offset=".08" stop-color="#34b49a"/><stop offset=".25" stop-color="#3cc6aa"/><stop offset=".45" stop-color="#39bea2"/><stop offset=".62" stop-color="#2f9e88"/><stop offset=".78" stop-color="#247a68"/><stop offset=".9" stop-color="#1b5547"/><stop offset=".96" stop-color="#1f5e50"/><stop offset="1" stop-color="#2a7a68"/></linearGradient></defs><path d="M780.9 288.3 V446.4 A197.6 120.25 0 0 0 1176.1 446.4 V288.3 A197.6 120.25 0 0 1 780.9 288.3 Z" fill="url(#side)"/><ellipse cx="978.5" cy="288.3" rx="197.6" ry="120.25" fill="#2b967e"/><path d="M781.7 298.8L781.7 456.9 M787.6 319.4L787.6 477.5 M799.4 339.1L799.4 497.2 M816.6 357.3L816.6 515.4 M838.8 373.3L838.8 531.4 M865.2 386.8L865.2 544.9 M895.0 397.3L895.0 555.4 M927.4 404.5L927.4 562.6 M961.3 408.1L961.3 566.2 M995.7 408.1L995.7 566.2 M1029.6 404.5L1029.6 562.6 M1062.0 397.3L1062.0 555.4 M1091.8 386.8L1091.8 544.9 M1118.2 373.3L1118.2 531.4 M1140.4 357.3L1140.4 515.4 M1157.6 339.1L1157.6 497.2 M1169.4 319.4L1169.4 477.5 M1175.3 298.8L1175.3 456.9 M780.9 327.8L781.2 334.1L782.0 340.4L783.3 346.6L785.2 352.8L787.6 358.9L790.6 365.0L794.0 370.9L798.0 376.7L802.4 382.4L807.4 387.9L812.8 393.3L818.6 398.5L824.9 403.5L831.7 408.3L838.8 412.9L846.3 417.2L854.1 421.3L862.4 425.1L870.9 428.7L879.7 432.0L888.8 435.0L898.1 437.7L907.7 440.1L917.4 442.2L927.4 444.0L937.4 445.4L947.6 446.6L957.8 447.4L968.2 447.9L978.5 448.1L988.8 447.9L999.2 447.4L1009.4 446.6L1019.6 445.4L1029.6 444.0L1039.6 442.2L1049.3 440.1L1058.9 437.7L1068.2 435.0L1077.3 432.0L1086.1 428.7L1094.6 425.1L1102.9 421.3L1110.7 417.2L1118.2 412.9L1125.3 408.3L1132.1 403.5L1138.4 398.5L1144.2 393.3L1149.6 387.9L1154.6 382.4L1159.0 376.7L1163.0 370.9L1166.4 365.0L1169.4 358.9L1171.8 352.8L1173.7 346.6L1175.0 340.4L1175.8 334.1L1176.1 327.8 M780.9 367.4L781.2 373.6L782.0 379.9L783.3 386.2L785.2 392.4L787.6 398.5L790.6 404.5L794.0 410.4L798.0 416.3L802.4 421.9L807.4 427.5L812.8 432.8L818.6 438.0L824.9 443.0L831.7 447.8L838.8 452.4L846.3 456.7L854.1 460.8L862.4 464.6L870.9 468.2L879.7 471.5L888.8 474.5L898.1 477.2L907.7 479.6L917.4 481.7L927.4 483.5L937.4 485.0L947.6 486.1L957.8 486.9L968.2 487.4L978.5 487.6L988.8 487.4L999.2 486.9L1009.4 486.1L1019.6 485.0L1029.6 483.5L1039.6 481.7L1049.3 479.6L1058.9 477.2L1068.2 474.5L1077.3 471.5L1086.1 468.2L1094.6 464.6L1102.9 460.8L1110.7 456.7L1118.2 452.4L1125.3 447.8L1132.1 443.0L1138.4 438.0L1144.2 432.8L1149.6 427.5L1154.6 421.9L1159.0 416.3L1163.0 410.4L1166.4 404.5L1169.4 398.5L1171.8 392.4L1173.7 386.2L1175.0 379.9L1175.8 373.6L1176.1 367.4 M780.9 406.9L781.2 413.2L782.0 419.4L783.3 425.7L785.2 431.9L787.6 438.0L790.6 444.0L794.0 450.0L798.0 455.8L802.4 461.5L807.4 467.0L812.8 472.4L818.6 477.6L824.9 482.6L831.7 487.3L838.8 491.9L846.3 496.2L854.1 500.3L862.4 504.2L870.9 507.7L879.7 511.0L888.8 514.0L898.1 516.7L907.7 519.1L917.4 521.2L927.4 523.0L937.4 524.5L947.6 525.6L957.8 526.5L968.2 527.0L978.5 527.1L988.8 527.0L999.2 526.5L1009.4 525.6L1019.6 524.5L1029.6 523.0L1039.6 521.2L1049.3 519.1L1058.9 516.7L1068.2 514.0L1077.3 511.0L1086.1 507.7L1094.6 504.2L1102.9 500.3L1110.7 496.2L1118.2 491.9L1125.3 487.3L1132.1 482.6L1138.4 477.6L1144.2 472.4L1149.6 467.0L1154.6 461.5L1159.0 455.8L1163.0 450.0L1166.4 444.0L1169.4 438.0L1171.8 431.9L1173.7 425.7L1175.0 419.4L1175.8 413.2L1176.1 406.9 M781.7 298.8L787.6 358.9 M781.7 377.8L787.6 438.0 M781.7 377.8L787.6 358.9 M787.6 358.9L799.4 418.2 M787.6 358.9L799.4 339.1 M787.6 438.0L799.4 497.2 M787.6 438.0L799.4 418.2 M799.4 339.1L816.6 396.8 M799.4 418.2L816.6 475.8 M799.4 418.2L816.6 396.8 M816.6 396.8L838.8 452.4 M816.6 396.8L838.8 373.3 M816.6 475.8L838.8 531.4 M816.6 475.8L838.8 452.4 M838.8 373.3L865.2 426.3 M838.8 452.4L865.2 505.4 M838.8 452.4L865.2 426.3 M865.2 426.3L895.0 476.3 M865.2 426.3L895.0 397.3 M865.2 505.4L895.0 555.4 M865.2 505.4L895.0 476.3 M895.0 397.3L927.4 444.0 M895.0 476.3L927.4 523.0 M895.0 476.3L927.4 444.0 M927.4 444.0L961.3 487.1 M927.4 444.0L961.3 408.1 M927.4 523.0L961.3 566.2 M927.4 523.0L961.3 487.1 M961.3 408.1L995.7 447.6 M961.3 487.1L995.7 526.7 M961.3 487.1L995.7 447.6 M995.7 447.6L1029.6 483.5 M995.7 447.6L1029.6 404.5 M995.7 526.7L1029.6 562.6 M995.7 526.7L1029.6 483.5 M1029.6 404.5L1062.0 436.8 M1029.6 483.5L1062.0 515.9 M1029.6 483.5L1062.0 436.8 M1062.0 436.8L1091.8 465.9 M1062.0 436.8L1091.8 386.8 M1062.0 515.9L1091.8 544.9 M1062.0 515.9L1091.8 465.9 M1091.8 386.8L1118.2 412.9 M1091.8 465.9L1118.2 491.9 M1091.8 465.9L1118.2 412.9 M1118.2 412.9L1140.4 436.3 M1118.2 412.9L1140.4 357.3 M1118.2 491.9L1140.4 515.4 M1118.2 491.9L1140.4 436.3 M1140.4 357.3L1157.6 378.6 M1140.4 436.3L1157.6 457.7 M1140.4 436.3L1157.6 378.6 M1157.6 378.6L1169.4 398.5 M1157.6 378.6L1169.4 319.4 M1157.6 457.7L1169.4 477.5 M1157.6 457.7L1169.4 398.5 M1169.4 319.4L1175.3 338.3 M1169.4 398.5L1175.3 417.4 M1169.4 398.5L1175.3 338.3" fill="none" stroke="#b6de3c" stroke-width="1"/><path d="M939.0 288.3A39.5 24.1 0 1 0 1018.0 288.3A39.5 24.1 0 1 0 939.0 288.3 M899.5 288.3A79.0 48.1 0 1 0 1057.5 288.3A79.0 48.1 0 1 0 899.5 288.3 M859.9 288.3A118.6 72.1 0 1 0 1097.1 288.3A118.6 72.1 0 1 0 859.9 288.3 M820.4 288.3A158.1 96.2 0 1 0 1136.6 288.3A158.1 96.2 0 1 0 820.4 288.3 M989.7 335.9L978.5 312.4 M989.7 335.9L990.7 311.2 M1011.3 332.1L990.7 311.2 M1011.3 332.1L1001.7 307.8 M1030.3 324.7L1001.7 307.8 M1030.3 324.7L1010.5 302.4 M1045.0 314.3L1010.5 302.4 M1045.0 314.3L1016.1 295.7 M1054.3 301.9L1016.1 295.7 M1054.3 301.9L1018.0 288.3 M1057.5 288.3L1018.0 288.3 M1057.5 288.3L1016.1 280.9 M1054.3 274.7L1018.0 288.3 M1054.3 274.7L1016.1 280.9 M1045.0 262.3L1016.1 280.9 M1045.0 262.3L1010.5 274.2 M1030.3 251.9L1010.5 274.2 M1030.3 251.9L1001.7 268.8 M1011.3 244.5L1001.7 268.8 M1011.3 244.5L990.7 265.4 M989.7 240.7L990.7 265.4 M989.7 240.7L978.5 264.2 M967.3 240.7L978.5 264.2 M967.3 240.7L966.3 265.4 M945.7 244.5L966.3 265.4 M945.7 244.5L955.3 268.8 M926.7 251.9L955.3 268.8 M926.7 251.9L946.5 274.2 M912.0 262.3L946.5 274.2 M912.0 262.3L940.9 280.9 M902.7 274.7L940.9 280.9 M902.7 274.7L939.0 288.3 M899.5 288.3L939.0 288.3 M899.5 288.3L940.9 295.7 M902.7 301.9L939.0 288.3 M902.7 301.9L940.9 295.7 M912.0 314.3L940.9 295.7 M912.0 314.3L946.5 302.4 M926.7 324.7L946.5 302.4 M926.7 324.7L955.3 307.8 M945.7 332.1L955.3 307.8 M945.7 332.1L966.3 311.2 M967.3 335.9L966.3 311.2 M967.3 335.9L978.5 312.4 M978.5 360.4L967.3 335.9 M978.5 360.4L989.7 335.9 M1006.9 358.4L989.7 335.9 M1006.9 358.4L1011.3 332.1 M1033.6 352.2L1011.3 332.1 M1033.6 352.2L1030.3 324.7 M1057.1 342.3L1030.3 324.7 M1057.1 342.3L1045.0 314.3 M1076.1 329.3L1030.3 324.7 M1076.1 329.3L1045.0 314.3 M1089.4 313.9L1045.0 314.3 M1089.4 313.9L1054.3 301.9 M1096.2 297.0L1054.3 301.9 M1096.2 297.0L1057.5 288.3 M1096.2 279.6L1057.5 288.3 M1096.2 279.6L1054.3 274.7 M1089.4 262.7L1054.3 274.7 M1089.4 262.7L1045.0 262.3 M1076.1 247.3L1045.0 262.3 M1076.1 247.3L1030.3 251.9 M1057.1 234.3L1045.0 262.3 M1057.1 234.3L1030.3 251.9 M1033.6 224.4L1030.3 251.9 M1033.6 224.4L1011.3 244.5 M1006.9 218.2L1011.3 244.5 M1006.9 218.2L989.7 240.7 M978.5 216.2L989.7 240.7 M978.5 216.2L967.3 240.7 M950.1 218.2L967.3 240.7 M950.1 218.2L945.7 244.5 M923.4 224.4L945.7 244.5 M923.4 224.4L926.7 251.9 M899.9 234.3L926.7 251.9 M899.9 234.3L912.0 262.3 M880.9 247.3L926.7 251.9 M880.9 247.3L912.0 262.3 M867.6 262.7L912.0 262.3 M867.6 262.7L902.7 274.7 M860.8 279.6L902.7 274.7 M860.8 279.6L899.5 288.3 M860.8 297.0L899.5 288.3 M860.8 297.0L902.7 301.9 M867.6 313.9L902.7 301.9 M867.6 313.9L912.0 314.3 M880.9 329.3L912.0 314.3 M880.9 329.3L926.7 324.7 M899.9 342.3L912.0 314.3 M899.9 342.3L926.7 324.7 M923.4 352.2L926.7 324.7 M923.4 352.2L945.7 332.1 M950.1 358.4L945.7 332.1 M950.1 358.4L967.3 335.9 M995.0 384.0L978.5 360.4 M995.0 384.0L1006.9 358.4 M1027.3 379.8L1006.9 358.4 M1027.3 379.8L1033.6 352.2 M1057.5 371.6L1033.6 352.2 M1057.5 371.6L1057.1 342.3 M1084.3 359.8L1057.1 342.3 M1084.3 359.8L1076.1 329.3 M1106.4 344.8L1057.1 342.3 M1106.4 344.8L1076.1 329.3 M1122.9 327.4L1076.1 329.3 M1122.9 327.4L1089.4 313.9 M1133.1 308.3L1089.4 313.9 M1133.1 308.3L1096.2 297.0 M1136.6 288.3L1096.2 297.0 M1136.6 288.3L1096.2 279.6 M1133.1 268.3L1096.2 279.6 M1133.1 268.3L1089.4 262.7 M1122.9 249.2L1089.4 262.7 M1122.9 249.2L1076.1 247.3 M1106.4 231.8L1076.1 247.3 M1106.4 231.8L1057.1 234.3 M1084.3 216.8L1076.1 247.3 M1084.3 216.8L1057.1 234.3 M1057.5 205.0L1057.1 234.3 M1057.5 205.0L1033.6 224.4 M1027.3 196.8L1033.6 224.4 M1027.3 196.8L1006.9 218.2 M995.0 192.6L1006.9 218.2 M995.0 192.6L978.5 216.2 M962.0 192.6L978.5 216.2 M962.0 192.6L950.1 218.2 M929.7 196.8L950.1 218.2 M929.7 196.8L923.4 224.4 M899.5 205.0L923.4 224.4 M899.5 205.0L899.9 234.3 M872.7 216.8L899.9 234.3 M872.7 216.8L880.9 247.3 M850.6 231.8L899.9 234.3 M850.6 231.8L880.9 247.3 M834.1 249.2L880.9 247.3 M834.1 249.2L867.6 262.7 M823.9 268.3L867.6 262.7 M823.9 268.3L860.8 279.6 M820.4 288.3L860.8 279.6 M820.4 288.3L860.8 297.0 M823.9 308.3L860.8 297.0 M823.9 308.3L867.6 313.9 M834.1 327.4L867.6 313.9 M834.1 327.4L880.9 329.3 M850.6 344.8L880.9 329.3 M850.6 344.8L899.9 342.3 M872.7 359.8L880.9 329.3 M872.7 359.8L899.9 342.3 M899.5 371.6L899.9 342.3 M899.5 371.6L923.4 352.2 M929.7 379.8L923.4 352.2 M929.7 379.8L950.1 358.4 M962.0 384.0L950.1 358.4 M962.0 384.0L978.5 360.4 M995.7 408.1L962.0 384.0 M995.7 408.1L995.0 384.0 M1029.6 404.5L995.0 384.0 M1029.6 404.5L1027.3 379.8 M1062.0 397.3L1027.3 379.8 M1062.0 397.3L1057.5 371.6 M1091.8 386.8L1057.5 371.6 M1091.8 386.8L1084.3 359.8 M1118.2 373.3L1084.3 359.8 M1118.2 373.3L1106.4 344.8 M1140.4 357.3L1106.4 344.8 M1140.4 357.3L1122.9 327.4 M1157.6 339.1L1106.4 344.8 M1157.6 339.1L1122.9 327.4 M1169.4 319.4L1122.9 327.4 M1169.4 319.4L1133.1 308.3 M1175.3 298.8L1133.1 308.3 M1175.3 298.8L1136.6 288.3 M1175.3 277.8L1136.6 288.3 M1175.3 277.8L1133.1 268.3 M1169.4 257.2L1133.1 268.3 M1169.4 257.2L1122.9 249.2 M1157.6 237.5L1122.9 249.2 M1157.6 237.5L1106.4 231.8 M1140.4 219.3L1122.9 249.2 M1140.4 219.3L1106.4 231.8 M1118.2 203.3L1106.4 231.8 M1118.2 203.3L1084.3 216.8 M1091.8 189.8L1084.3 216.8 M1091.8 189.8L1057.5 205.0 M1062.0 179.3L1057.5 205.0 M1062.0 179.3L1027.3 196.8 M1029.6 172.1L1027.3 196.8 M1029.6 172.1L995.0 192.6 M995.7 168.5L995.0 192.6 M995.7 168.5L962.0 192.6 M961.3 168.5L995.0 192.6 M961.3 168.5L962.0 192.6 M927.4 172.1L962.0 192.6 M927.4 172.1L929.7 196.8 M895.0 179.3L929.7 196.8 M895.0 179.3L899.5 205.0 M865.2 189.8L899.5 205.0 M865.2 189.8L872.7 216.8 M838.8 203.3L872.7 216.8 M838.8 203.3L850.6 231.8 M816.6 219.3L850.6 231.8 M816.6 219.3L834.1 249.2 M799.4 237.5L850.6 231.8 M799.4 237.5L834.1 249.2 M787.6 257.2L834.1 249.2 M787.6 257.2L823.9 268.3 M781.7 277.8L823.9 268.3 M781.7 277.8L820.4 288.3 M781.7 298.8L820.4 288.3 M781.7 298.8L823.9 308.3 M787.6 319.4L823.9 308.3 M787.6 319.4L834.1 327.4 M799.4 339.1L834.1 327.4 M799.4 339.1L850.6 344.8 M816.6 357.3L834.1 327.4 M816.6 357.3L850.6 344.8 M838.8 373.3L850.6 344.8 M838.8 373.3L872.7 359.8 M865.2 386.8L872.7 359.8 M865.2 386.8L899.5 371.6 M895.0 397.3L899.5 371.6 M895.0 397.3L929.7 379.8 M927.4 404.5L929.7 379.8 M927.4 404.5L962.0 384.0 M961.3 408.1L962.0 384.0 M961.3 408.1L995.0 384.0 M978.5 312.4L967.3 335.9 M978.5 312.4L989.7 335.9 M990.7 311.2L989.7 335.9 M990.7 311.2L1011.3 332.1 M1001.7 307.8L1011.3 332.1 M1001.7 307.8L1030.3 324.7 M1010.5 302.4L1030.3 324.7 M1010.5 302.4L1045.0 314.3 M1016.1 295.7L1045.0 314.3 M1016.1 295.7L1054.3 301.9 M1018.0 288.3L1057.5 288.3 M1018.0 288.3L1054.3 274.7 M1016.1 280.9L1054.3 274.7 M1016.1 280.9L1045.0 262.3 M1010.5 274.2L1045.0 262.3 M1010.5 274.2L1030.3 251.9 M1001.7 268.8L1030.3 251.9 M1001.7 268.8L1011.3 244.5 M990.7 265.4L1011.3 244.5 M990.7 265.4L989.7 240.7 M978.5 264.2L989.7 240.7 M978.5 264.2L967.3 240.7 M966.3 265.4L967.3 240.7 M966.3 265.4L945.7 244.5 M955.3 268.8L945.7 244.5 M955.3 268.8L926.7 251.9 M946.5 274.2L926.7 251.9 M946.5 274.2L912.0 262.3 M940.9 280.9L912.0 262.3 M940.9 280.9L902.7 274.7 M939.0 288.3L899.5 288.3 M939.0 288.3L902.7 301.9 M940.9 295.7L902.7 301.9 M940.9 295.7L912.0 314.3 M946.5 302.4L912.0 314.3 M946.5 302.4L926.7 324.7 M955.3 307.8L926.7 324.7 M955.3 307.8L945.7 332.1 M966.3 311.2L945.7 332.1 M966.3 311.2L967.3 335.9 M989.7 335.9L978.5 360.4 M989.7 335.9L1006.9 358.4 M1011.3 332.1L1006.9 358.4 M1011.3 332.1L1033.6 352.2 M1030.3 324.7L1033.6 352.2 M1030.3 324.7L1057.1 342.3 M1045.0 314.3L1076.1 329.3 M1045.0 314.3L1089.4 313.9 M1054.3 301.9L1089.4 313.9 M1054.3 301.9L1096.2 297.0 M1057.5 288.3L1096.2 297.0 M1057.5 288.3L1096.2 279.6 M1054.3 274.7L1096.2 279.6 M1054.3 274.7L1089.4 262.7 M1045.0 262.3L1089.4 262.7 M1045.0 262.3L1076.1 247.3 M1030.3 251.9L1057.1 234.3 M1030.3 251.9L1033.6 224.4 M1011.3 244.5L1033.6 224.4 M1011.3 244.5L1006.9 218.2 M989.7 240.7L1006.9 218.2 M989.7 240.7L978.5 216.2 M967.3 240.7L978.5 216.2 M967.3 240.7L950.1 218.2 M945.7 244.5L950.1 218.2 M945.7 244.5L923.4 224.4 M926.7 251.9L923.4 224.4 M926.7 251.9L899.9 234.3 M912.0 262.3L880.9 247.3 M912.0 262.3L867.6 262.7 M902.7 274.7L867.6 262.7 M902.7 274.7L860.8 279.6 M899.5 288.3L860.8 279.6 M899.5 288.3L860.8 297.0 M902.7 301.9L860.8 297.0 M902.7 301.9L867.6 313.9 M912.0 314.3L867.6 313.9 M912.0 314.3L880.9 329.3 M926.7 324.7L899.9 342.3 M926.7 324.7L923.4 352.2 M945.7 332.1L923.4 352.2 M945.7 332.1L950.1 358.4 M967.3 335.9L950.1 358.4 M967.3 335.9L978.5 360.4 M978.5 360.4L962.0 384.0 M978.5 360.4L995.0 384.0 M1006.9 358.4L995.0 384.0 M1006.9 358.4L1027.3 379.8 M1033.6 352.2L1027.3 379.8 M1033.6 352.2L1057.5 371.6 M1057.1 342.3L1057.5 371.6 M1057.1 342.3L1084.3 359.8 M1076.1 329.3L1106.4 344.8 M1076.1 329.3L1122.9 327.4 M1089.4 313.9L1122.9 327.4 M1089.4 313.9L1133.1 308.3 M1096.2 297.0L1133.1 308.3 M1096.2 297.0L1136.6 288.3 M1096.2 279.6L1136.6 288.3 M1096.2 279.6L1133.1 268.3 M1089.4 262.7L1133.1 268.3 M1089.4 262.7L1122.9 249.2 M1076.1 247.3L1122.9 249.2 M1076.1 247.3L1106.4 231.8 M1057.1 234.3L1084.3 216.8 M1057.1 234.3L1057.5 205.0 M1033.6 224.4L1057.5 205.0 M1033.6 224.4L1027.3 196.8 M1006.9 218.2L1027.3 196.8 M1006.9 218.2L995.0 192.6 M978.5 216.2L995.0 192.6 M978.5 216.2L962.0 192.6 M950.1 218.2L962.0 192.6 M950.1 218.2L929.7 196.8 M923.4 224.4L929.7 196.8 M923.4 224.4L899.5 205.0 M899.9 234.3L899.5 205.0 M899.9 234.3L872.7 216.8 M880.9 247.3L850.6 231.8 M880.9 247.3L834.1 249.2 M867.6 262.7L834.1 249.2 M867.6 262.7L823.9 268.3 M860.8 279.6L823.9 268.3 M860.8 279.6L820.4 288.3 M860.8 297.0L820.4 288.3 M860.8 297.0L823.9 308.3 M867.6 313.9L823.9 308.3 M867.6 313.9L834.1 327.4 M880.9 329.3L834.1 327.4 M880.9 329.3L850.6 344.8 M899.9 342.3L872.7 359.8 M899.9 342.3L899.5 371.6 M923.4 352.2L899.5 371.6 M923.4 352.2L929.7 379.8 M950.1 358.4L929.7 379.8 M950.1 358.4L962.0 384.0 M995.0 384.0L995.7 408.1 M995.0 384.0L1029.6 404.5 M1027.3 379.8L1029.6 404.5 M1027.3 379.8L1062.0 397.3 M1057.5 371.6L1062.0 397.3 M1057.5 371.6L1091.8 386.8 M1084.3 359.8L1091.8 386.8 M1084.3 359.8L1118.2 373.3 M1106.4 344.8L1118.2 373.3 M1106.4 344.8L1140.4 357.3 M1122.9 327.4L1157.6 339.1 M1122.9 327.4L1169.4 319.4 M1133.1 308.3L1169.4 319.4 M1133.1 308.3L1175.3 298.8 M1136.6 288.3L1175.3 298.8 M1136.6 288.3L1175.3 277.8 M1133.1 268.3L1175.3 277.8 M1133.1 268.3L1169.4 257.2 M1122.9 249.2L1169.4 257.2 M1122.9 249.2L1157.6 237.5 M1106.4 231.8L1140.4 219.3 M1106.4 231.8L1118.2 203.3 M1084.3 216.8L1118.2 203.3 M1084.3 216.8L1091.8 189.8 M1057.5 205.0L1091.8 189.8 M1057.5 205.0L1062.0 179.3 M1027.3 196.8L1062.0 179.3 M1027.3 196.8L1029.6 172.1 M995.0 192.6L1029.6 172.1 M995.0 192.6L995.7 168.5 M962.0 192.6L961.3 168.5 M962.0 192.6L927.4 172.1 M929.7 196.8L927.4 172.1 M929.7 196.8L895.0 179.3 M899.5 205.0L895.0 179.3 M899.5 205.0L865.2 189.8 M872.7 216.8L865.2 189.8 M872.7 216.8L838.8 203.3 M850.6 231.8L838.8 203.3 M850.6 231.8L816.6 219.3 M834.1 249.2L799.4 237.5 M834.1 249.2L787.6 257.2 M823.9 268.3L787.6 257.2 M823.9 268.3L781.7 277.8 M820.4 288.3L781.7 277.8 M820.4 288.3L781.7 298.8 M823.9 308.3L781.7 298.8 M823.9 308.3L787.6 319.4 M834.1 327.4L787.6 319.4 M834.1 327.4L799.4 339.1 M850.6 344.8L816.6 357.3 M850.6 344.8L838.8 373.3 M872.7 359.8L838.8 373.3 M872.7 359.8L865.2 386.8 M899.5 371.6L865.2 386.8 M899.5 371.6L895.0 397.3 M929.7 379.8L895.0 397.3 M929.7 379.8L927.4 404.5 M962.0 384.0L927.4 404.5 M962.0 384.0L961.3 408.1" fill="none" stroke="#b6de3c" stroke-width="1"/><path d="M977.3 312.4h2.4 M989.5 311.2h2.4 M1000.5 307.8h2.4 M1009.3 302.4h2.4 M1014.9 295.7h2.4 M1016.8 288.3h2.4 M1014.9 280.9h2.4 M1009.3 274.2h2.4 M1000.5 268.8h2.4 M989.5 265.4h2.4 M977.3 264.2h2.4 M965.1 265.4h2.4 M954.1 268.8h2.4 M945.3 274.2h2.4 M939.7 280.9h2.4 M937.8 288.3h2.4 M939.7 295.7h2.4 M945.3 302.4h2.4 M954.1 307.8h2.4 M965.1 311.2h2.4 M988.5 335.9h2.4 M1010.1 332.1h2.4 M1029.1 324.7h2.4 M1043.8 314.3h2.4 M1053.1 301.9h2.4 M1056.3 288.3h2.4 M1053.1 274.7h2.4 M1043.8 262.3h2.4 M1029.1 251.9h2.4 M1010.1 244.5h2.4 M988.5 240.7h2.4 M966.1 240.7h2.4 M944.5 244.5h2.4 M925.5 251.9h2.4 M910.8 262.3h2.4 M901.5 274.7h2.4 M898.3 288.3h2.4 M901.5 301.9h2.4 M910.8 314.3h2.4 M925.5 324.7h2.4 M944.5 332.1h2.4 M966.1 335.9h2.4 M977.3 360.4h2.4 M1005.7 358.4h2.4 M1032.4 352.2h2.4 M1055.9 342.3h2.4 M1074.9 329.3h2.4 M1088.2 313.9h2.4 M1095.0 297.0h2.4 M1095.0 279.6h2.4 M1088.2 262.7h2.4 M1074.9 247.3h2.4 M1055.9 234.3h2.4 M1032.4 224.4h2.4 M1005.7 218.2h2.4 M977.3 216.2h2.4 M948.9 218.2h2.4 M922.2 224.4h2.4 M898.7 234.3h2.4 M879.7 247.3h2.4 M866.4 262.7h2.4 M859.6 279.6h2.4 M859.6 297.0h2.4 M866.4 313.9h2.4 M879.7 329.3h2.4 M898.7 342.3h2.4 M922.2 352.2h2.4 M948.9 358.4h2.4 M993.8 384.0h2.4 M1026.1 379.8h2.4 M1056.3 371.6h2.4 M1083.1 359.8h2.4 M1105.2 344.8h2.4 M1121.7 327.4h2.4 M1131.9 308.3h2.4 M1135.4 288.3h2.4 M1131.9 268.3h2.4 M1121.7 249.2h2.4 M1105.2 231.8h2.4 M1083.1 216.8h2.4 M1056.3 205.0h2.4 M1026.1 196.8h2.4 M993.8 192.6h2.4 M960.8 192.6h2.4 M928.5 196.8h2.4 M898.3 205.0h2.4 M871.5 216.8h2.4 M849.4 231.8h2.4 M832.9 249.2h2.4 M822.7 268.3h2.4 M819.2 288.3h2.4 M822.7 308.3h2.4 M832.9 327.4h2.4 M849.4 344.8h2.4 M871.5 359.8h2.4 M898.3 371.6h2.4 M928.5 379.8h2.4 M960.8 384.0h2.4 M994.5 408.1h2.4 M1028.4 404.5h2.4 M1060.8 397.3h2.4 M1090.6 386.8h2.4 M1117.0 373.3h2.4 M1139.2 357.3h2.4 M1156.4 339.1h2.4 M1168.2 319.4h2.4 M1174.1 298.8h2.4 M1174.1 277.8h2.4 M1168.2 257.2h2.4 M1156.4 237.5h2.4 M1139.2 219.3h2.4 M1117.0 203.3h2.4 M1090.6 189.8h2.4 M1060.8 179.3h2.4 M1028.4 172.1h2.4 M994.5 168.5h2.4 M960.1 168.5h2.4 M926.2 172.1h2.4 M893.8 179.3h2.4 M864.0 189.8h2.4 M837.6 203.3h2.4 M815.4 219.3h2.4 M798.2 237.5h2.4 M786.4 257.2h2.4 M780.5 277.8h2.4 M780.5 298.8h2.4 M786.4 319.4h2.4 M798.2 339.1h2.4 M815.4 357.3h2.4 M837.6 373.3h2.4 M864.0 386.8h2.4 M893.8 397.3h2.4 M926.2 404.5h2.4 M960.1 408.1h2.4" stroke="#e6f22a" stroke-width="1.6"/><path d="M978.5 288.3L986.3 360.3 M978.5 288.3L993.9 335.5 M978.5 288.3L1003.9 333.8 M978.5 288.3L1030.9 353.0 M978.5 288.3L1022.4 328.3 M978.5 288.3L1030.6 324.5 M978.5 288.3L1067.6 335.9 M978.5 288.3L1044.2 315.0 M978.5 288.3L1049.4 309.6 M978.5 288.3L1090.8 311.5 M978.5 288.3L1056.0 297.7 M978.5 288.3L1057.4 291.4 M978.5 288.3L1096.8 283.6 M978.5 288.3L1056.0 278.9 M978.5 288.3L1053.3 272.8 M978.5 288.3L1084.8 256.4 M978.5 288.3L1044.2 261.6 M978.5 288.3L1037.9 256.6 M978.5 288.3L1056.7 234.1 M978.5 288.3L1022.4 248.3 M978.5 288.3L1013.5 245.2 M978.5 288.3L1016.6 220.0 M978.5 288.3L993.9 241.1 M978.5 288.3L983.7 240.3 M978.5 288.3L970.7 216.3 M978.5 288.3L963.1 241.1 M978.5 288.3L953.1 242.8 M978.5 288.3L926.1 223.6 M978.5 288.3L934.6 248.3 M978.5 288.3L926.4 252.1 M978.5 288.3L889.4 240.7 M978.5 288.3L912.8 261.6 M978.5 288.3L907.6 267.0 M978.5 288.3L866.2 265.1 M978.5 288.3L901.0 278.9 M978.5 288.3L899.6 285.2 M978.5 288.3L860.2 293.0 M978.5 288.3L901.0 297.7 M978.5 288.3L903.7 303.8 M978.5 288.3L872.2 320.2 M978.5 288.3L912.8 315.0 M978.5 288.3L919.1 320.0 M978.5 288.3L900.3 342.5 M978.5 288.3L934.6 328.3 M978.5 288.3L943.5 331.4 M978.5 288.3L940.4 356.6 M978.5 288.3L963.1 335.5 M978.5 288.3L973.3 336.3" fill="none" stroke="#c4e438" stroke-width=".9"/><ellipse cx="978.5" cy="288.3" rx="11" ry="2.6" fill="#f0f420" opacity=".85"/><path d="M780.9 288.3 A197.6 120.25 0 0 1 1176.1 288.3 M1176.1 446.4 A197.6 120.25 0 0 1 780.9 446.4" fill="none" stroke="#ff8c00" stroke-width="4.5"/><path d="M780.9 288.3 V446.4 M1176.1 288.3 V446.4" fill="none" stroke="#ff8c00" stroke-width="3.6"/><line x1="977.6" y1="166" x2="977.6" y2="208.5" stroke="#1f4f8e" stroke-width="1.6"/><line x1="977.6" y1="218" x2="977.6" y2="228" stroke="#1f4f8e" stroke-width="1.6"/><line x1="977.6" y1="237.5" x2="977.6" y2="288" stroke="#1f4f8e" stroke-width="1.6"/></svg>
<svg style="left:0;top:0" width="1" height="1"><defs><linearGradient id="bz" x1="0" y1="0" x2="1" y2="0"><stop offset="0" stop-color="#2f5f90"/><stop offset=".45" stop-color="#5a90c8"/><stop offset="1" stop-color="#2a5585"/></linearGradient><radialGradient id="ys" cx=".4" cy=".35" r=".7"><stop offset="0" stop-color="#ffd84a"/><stop offset=".7" stop-color="#e0a010"/><stop offset="1" stop-color="#a07010"/></radialGradient></defs><defs><filter id="tb" x="-5%" y="-5%" width="110%" height="110%"><feGaussianBlur stdDeviation=".4"/></filter></defs><path d="M905.3 307.2L902.1 309.2L898.9 311.4L895.7 313.9L892.6 316.6L889.5 319.5L886.5 322.6L883.5 325.8L880.7 329.2L878.0 332.8L875.4 336.5L872.9 340.3L870.5 344.2L868.3 348.3L866.3 352.3L864.4 356.5L862.7 360.6L861.2 364.8L859.9 369.0L858.7 373.1L857.8 377.3L857.1 381.3L856.5 385.3L856.2 389.2L856.1 393.0" fill="none" stroke="#34602f" stroke-width="11.5"/><path d="M905.3 307.2L902.1 309.2L898.9 311.4L895.7 313.9L892.6 316.6L889.5 319.5L886.5 322.6L883.5 325.8L880.7 329.2L878.0 332.8L875.4 336.5L872.9 340.3L870.5 344.2L868.3 348.3L866.3 352.3L864.4 356.5L862.7 360.6L861.2 364.8L859.9 369.0L858.7 373.1L857.8 377.3L857.1 381.3L856.5 385.3L856.2 389.2L856.1 393.0" fill="none" stroke="#4e8a4a" stroke-width="8.5"/><path d="M905.3 307.2L902.1 309.2L898.9 311.4L895.7 313.9L892.6 316.6L889.5 319.5L886.5 322.6L883.5 325.8L880.7 329.2L878.0 332.8L875.4 336.5L872.9 340.3L870.5 344.2L868.3 348.3L866.3 352.3L864.4 356.5L862.7 360.6L861.2 364.8L859.9 369.0L858.7 373.1L857.8 377.3L857.1 381.3L856.5 385.3L856.2 389.2L856.1 393.0" fill="none" stroke="#6aa464" stroke-width="2.5" opacity=".6"/><path d="M856.1 393.0L859.5 394.8L863.0 396.4L866.7 397.9L870.6 399.3L874.7 400.5L878.9 401.5L883.1 402.4L887.5 403.2L892.0 403.7L896.5 404.1L901.1 404.4L905.6 404.4L910.2 404.3L914.7 404.0L919.3 403.6L923.7 402.9L928.1 402.1L932.3 401.2L936.5 400.1L940.5 398.8L944.4 397.4L948.1 395.8L951.6 394.1L954.9 392.3" fill="none" stroke="#2c5a8c" stroke-width="11.5"/><path d="M856.1 393.0L859.5 394.8L863.0 396.4L866.7 397.9L870.6 399.3L874.7 400.5L878.9 401.5L883.1 402.4L887.5 403.2L892.0 403.7L896.5 404.1L901.1 404.4L905.6 404.4L910.2 404.3L914.7 404.0L919.3 403.6L923.7 402.9L928.1 402.1L932.3 401.2L936.5 400.1L940.5 398.8L944.4 397.4L948.1 395.8L951.6 394.1L954.9 392.3" fill="none" stroke="#4580bd" stroke-width="8.5"/><path d="M856.1 393.0L859.5 394.8L863.0 396.4L866.7 397.9L870.6 399.3L874.7 400.5L878.9 401.5L883.1 402.4L887.5 403.2L892.0 403.7L896.5 404.1L901.1 404.4L905.6 404.4L910.2 404.3L914.7 404.0L919.3 403.6L923.7 402.9L928.1 402.1L932.3 401.2L936.5 400.1L940.5 398.8L944.4 397.4L948.1 395.8L951.6 394.1L954.9 392.3" fill="none" stroke="#6ea4d8" stroke-width="2.5" opacity=".6"/><path d="M905.3 307.2L908.5 309.2L911.8 311.4L915.0 313.8L918.1 316.4L921.3 319.3L924.3 322.3L927.3 325.5L930.1 328.9L932.9 332.4L935.5 336.1L938.0 339.9L940.4 343.8L942.6 347.7L944.7 351.8L946.6 355.9L948.3 360.0L949.8 364.2L951.2 368.3L952.3 372.5L953.3 376.6L954.0 380.6L954.5 384.6L954.8 388.5L954.9 392.3" fill="none" stroke="#8e1a06" stroke-width="11.5"/><path d="M905.3 307.2L908.5 309.2L911.8 311.4L915.0 313.8L918.1 316.4L921.3 319.3L924.3 322.3L927.3 325.5L930.1 328.9L932.9 332.4L935.5 336.1L938.0 339.9L940.4 343.8L942.6 347.7L944.7 351.8L946.6 355.9L948.3 360.0L949.8 364.2L951.2 368.3L952.3 372.5L953.3 376.6L954.0 380.6L954.5 384.6L954.8 388.5L954.9 392.3" fill="none" stroke="#cc2e0c" stroke-width="8.5"/><path d="M905.3 307.2L908.5 309.2L911.8 311.4L915.0 313.8L918.1 316.4L921.3 319.3L924.3 322.3L927.3 325.5L930.1 328.9L932.9 332.4L935.5 336.1L938.0 339.9L940.4 343.8L942.6 347.7L944.7 351.8L946.6 355.9L948.3 360.0L949.8 364.2L951.2 368.3L952.3 372.5L953.3 376.6L954.0 380.6L954.5 384.6L954.8 388.5L954.9 392.3" fill="none" stroke="#e8502a" stroke-width="2.5" opacity=".6"/><circle cx="905.3" cy="364.7" r="9.5" fill="url(#ys)"/><line x1="900.1" y1="367.2" x2="836.3" y2="404.6" stroke="#8e1a06" stroke-width="10.5"/><line x1="900.1" y1="367.2" x2="836.3" y2="404.6" stroke="#c42c0c" stroke-width="6.5"/><line x1="910.5" y1="367.2" x2="975.0" y2="403.6" stroke="#34602f" stroke-width="10.5"/><line x1="910.5" y1="367.2" x2="975.0" y2="403.6" stroke="#4e8a4a" stroke-width="6.5"/><path d="M834.1 394.9L817.7 415.5L843.6 411.3Z" fill="#9a1c06"/><path d="M833.6 400.1L817.7 415.5L838.8 403.1Z" fill="#d8401a" opacity=".8"/><path d="M967.7 410.4L993.7 414.2L977.1 393.9Z" fill="#3a6a36"/><path d="M972.4 408.2L993.7 414.2L972.4 402.2Z" fill="#5a9a56" opacity=".8"/><line x1="905.3" y1="357.2" x2="905.3" y2="286.2" stroke="#2a5a8a" stroke-width="10.5"/><line x1="905.3" y1="357.2" x2="905.3" y2="286.2" stroke="#4a86c0" stroke-width="6.5"/><path d="M914.3 286.7L905.3 263.7L896.3 286.7Z" fill="#2f6296"/><path d="M910.2 283.7L905.3 263.7L905.3 286.7Z" fill="#5a96cc" opacity=".8"/><line x1="905.3" y1="357.2" x2="905.3" y2="286.2" stroke="url(#bz)" stroke-width="10.5" /><circle cx="905.3" cy="365.2" r="5" fill="url(#ys)"/></svg>
<svg style="left:0;top:0" width="1" height="1"><line x1="1186.7" y1="165.5" x2="1186.7" y2="125.5" stroke="#c68ad8" stroke-width="1.2"/><line x1="1186.7" y1="165.5" x2="1151.5" y2="187" stroke="#f39a9a" stroke-width="1.1"/><line x1="1186.7" y1="165.5" x2="1222" y2="185.8" stroke="#f39a9a" stroke-width="1.1"/><path d="M1186.7 140.4 L1165.5 153.3 V177.7 L1186.7 189.2 L1207.8 177.7 V153.3 Z M1165.5 153.3 L1186.7 165.5 L1207.8 153.3 M1186.7 165.5 V189.2" fill="none" stroke="#3a3a3a" stroke-width=".9"/><text x="1188" y="124" font-family="Liberation Sans" font-size="15.5" fill="#9a3ab8" stroke="#9a3ab8" stroke-width=".3">Z</text><text x="1154" y="185" font-family="Liberation Sans" font-size="15" fill="#f04848">X</text><text x="1224" y="183.5" font-family="Liberation Sans" font-size="15" fill="#f04848">Y</text></svg>
</body></html>
